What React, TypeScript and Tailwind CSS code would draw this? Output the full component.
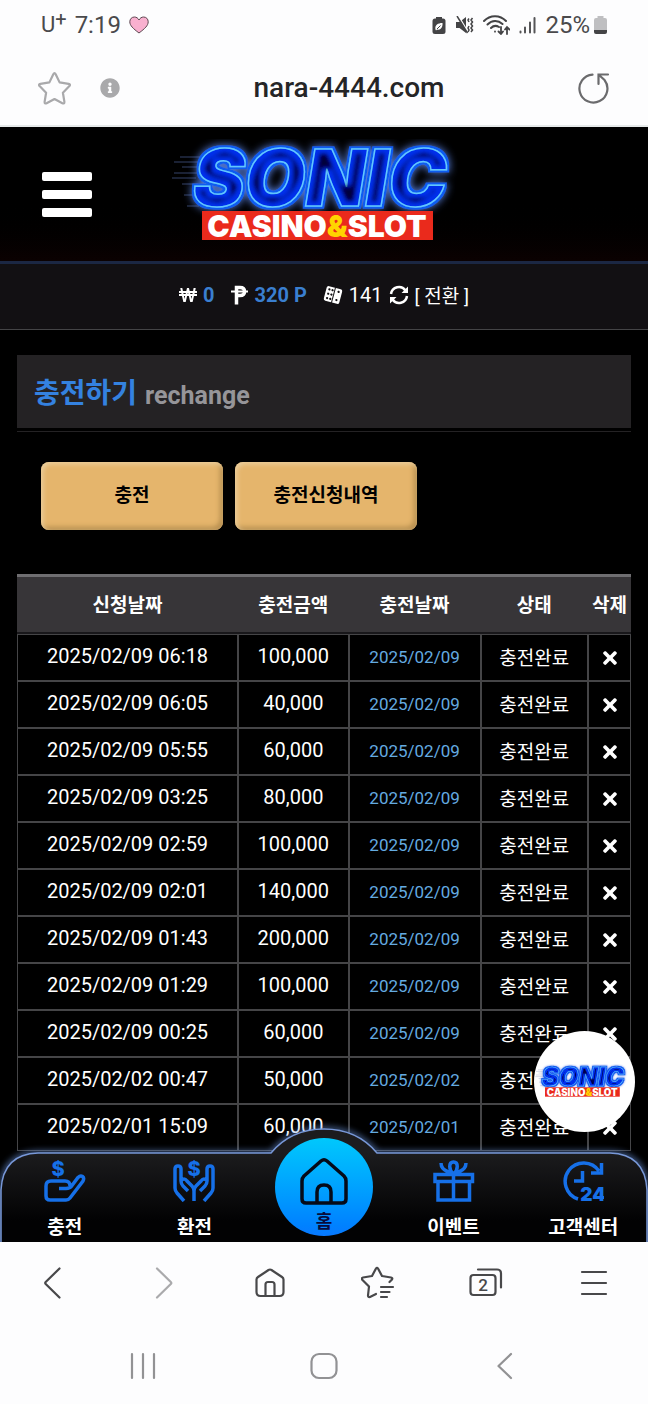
import type { ReactNode } from "react";
import { FaInfoCircle, FaTimes, FaWonSign } from "react-icons/fa";

const rows = [
	{ requested: "2025/02/09 06:18", amount: "100,000", charged: "2025/02/09" },
	{ requested: "2025/02/09 06:05", amount: "40,000", charged: "2025/02/09" },
	{ requested: "2025/02/09 05:55", amount: "60,000", charged: "2025/02/09" },
	{ requested: "2025/02/09 03:25", amount: "80,000", charged: "2025/02/09" },
	{ requested: "2025/02/09 02:59", amount: "100,000", charged: "2025/02/09" },
	{ requested: "2025/02/09 02:01", amount: "140,000", charged: "2025/02/09" },
	{ requested: "2025/02/09 01:43", amount: "200,000", charged: "2025/02/09" },
	{ requested: "2025/02/09 01:29", amount: "100,000", charged: "2025/02/09" },
	{ requested: "2025/02/09 00:25", amount: "60,000", charged: "2025/02/09" },
	{ requested: "2025/02/02 00:47", amount: "50,000", charged: "2025/02/02" },
	{ requested: "2025/02/01 15:09", amount: "60,000", charged: "2025/02/01" },
];

function Logo({ id, className }: { id: string; className: string }) {
	return (
		<svg viewBox="168 140 312 110" className={className} role="img" aria-label="Sonic Casino & Slot">
			<defs>
				{/* Blue rim and halo outside the letters, navy core inside them */}
				<filter id={`${id}-neon`} x="-10%" y="-20%" width="120%" height="140%">
					<feMorphology in="SourceAlpha" operator="dilate" radius="2" result="fat" />
					<feFlood floodColor="#0b5cf0" />
					<feComposite in2="fat" operator="in" result="rim" />
					<feGaussianBlur in="fat" stdDeviation="4" result="soft" />
					<feFlood floodColor="#5a84e8" />
					<feComposite in2="soft" operator="in" result="halo" />
					<feMorphology in="SourceAlpha" operator="erode" radius="5" />
					<feGaussianBlur stdDeviation="2" result="inner" />
					<feFlood floodColor="#02023c" />
					<feComposite in2="inner" operator="in" result="core" />
					<feMerge>
						<feMergeNode in="halo" />
						<feMergeNode in="rim" />
						<feMergeNode in="SourceGraphic" />
						<feMergeNode in="core" />
					</feMerge>
				</filter>
			</defs>
			<path
				d="M180 158h22M174 163h26M182 168h18M174 174h24M172 179h24M182 185h16M184 196h14M187 207h12"
				stroke="#4d5f96"
				strokeWidth="1"
				opacity="0.7"
			/>
			<text
				x="193"
				y="207"
				fontFamily="Inter, sans-serif"
				fontWeight="900"
				fontStyle="italic"
				fontSize="78"
				fill="#0532ee"
				stroke="#62c8ff"
				strokeWidth="1.5"
				filter={`url(#${id}-neon)`}
			>
				SONIC
			</text>
			<rect x="202" y="212" width="231" height="29" fill="#ea2a1c" />
			<text x="317" y="238" textAnchor="middle" fontFamily="Inter, sans-serif" fontWeight="900" fontSize="30" fill="#fff">
				CASINO<tspan fill="#ffd400">&amp;</tspan>SLOT
			</text>
		</svg>
	);
}

function StatusBar() {
	return (
		<div className="flex h-[50px] items-center justify-between px-[41px] text-2xl text-[#4a4a4c]">
			<div className="flex items-center gap-2">
				<span className="flex items-start text-[22px] leading-7">
					U<span className="text-xl leading-4">+</span>
				</span>
				<span>7:19</span>
				<svg viewBox="0 0 20 18" className="h-[18px] w-5" fill="#f9b0cf" stroke="#5c4650" strokeWidth="1">
					<path d="M10 17C4 12.500.800 9.500.800 5.800.800 3 2.800 1 5.400 1 7.500 1 9 2.200 10 4c1-1.800 2.500-3 4.600-3 2.600 0 4.600 2 4.600 4.800C19.200 9.500 16 12.500 10 17z" />
				</svg>
			</div>
			<div className="flex items-center gap-[9px]">
				<svg viewBox="0 0 14 18" className="h-[18px] w-3.5" fill="#444446">
					<path d="M4 1h6v2H4z" />
					<rect x="0.5" y="2.500" width="13" height="15.500" rx="2.500" />
					<path d="M3.500 13.500C2.500 9 6 7 10.500 7c.5 4-2 7.500-5.500 6.500l-1 1z" fill="#fff" />
					<path d="M5 13l3.500-3.500" stroke="#444446" />
				</svg>
				<svg viewBox="0 0 19 18" className="h-[18px] w-[19px]" fill="#444446">
					<path d="M1 6h3.500L11 1v16l-6.500-5H1z" />
					<path d="M3.500 0l10 17" stroke="#fff" strokeWidth="1.500" />
					<path d="M2 0l10.500 17" stroke="#444446" strokeWidth="1.500" />
					<path d="M14 2.500l-1 1.500 1 2M17.500 2l-1.500 2 1.500 2-1.500 2 1.500 2-1.500 2 1.500 2-1.500 2M14 10l-1 2 1 2-1 2" stroke="#444446" strokeWidth="1.500" fill="none" />
				</svg>
				<svg viewBox="0 0 27 20" className="h-5 w-[27px]" fill="none" stroke="#444446" strokeWidth="2" strokeLinecap="round">
					<path d="M1 6C7-.5 17-.5 23 6M4.500 9.500c4.500-4.500 10.500-4.500 15-.5M8 13c2.500-2.500 5.500-2.500 8-1" />
					<path d="M12 16.500v.2M18 12v7m-2.500-2.500L18 19l2-2.500M24 19v-7m-2 2.500l2-2.500 2.500 2.500" strokeWidth="1.800" />
				</svg>
				<svg viewBox="0 0 17 18" className="h-[18px] w-[17px]" stroke="#555557" strokeWidth="2" strokeLinecap="round">
					<path d="M1.500 15.500v1M6 11.500v5M11 6.500v10M15.500 2v14.500" />
				</svg>
				<span className="flex items-center gap-1">
					25%
					<svg viewBox="0 0 13 18" className="h-[18px] w-[13px]">
						<path d="M3.500 0h6v2H11a2 2 0 0 1 2 2v10H0V4a2 2 0 0 1 2-2h1.500z" fill="#bfbfc1" />
						<path d="M0 14h13v2a2 2 0 0 1-2 2H2a2 2 0 0 1-2-2z" fill="#444446" />
					</svg>
				</span>
			</div>
		</div>
	);
}

function AddressBar() {
	return (
		<div className="flex h-[77px] items-center border-b-2 border-[#e6eaea] px-[38px]">
			<button type="button" aria-label="Bookmark">
				<svg viewBox="0 0 34 34" className="h-[34px] w-[34px]" fill="none" stroke="#a9a9ab" strokeWidth="2.200" strokeLinejoin="round">
					<path d="M15.300 3.200q1.200-2 2.400 0l3.900 8.200 9 1.400q2.200.6.800 2.300l-6.500 6.600 1.500 9.200q0 2.200-2 1.400L16.500 28l-7.900 4.300q-2 .8-2-1.400L8.100 21.700 1.600 15.100q-1.400-1.700.8-2.300l9-1.400z" />
				</svg>
			</button>
			<button type="button" aria-label="Site information" className="ml-7">
				<FaInfoCircle className="h-5 w-5 text-[#a9a9ab]" />
			</button>
			<span className="flex-1 text-center text-[28px] font-medium text-[#252527]">nara-4444.com</span>
			<button type="button" aria-label="Reload">
				<svg viewBox="0 0 32 32" className="h-8 w-8" fill="none" stroke="#6b6b6d" strokeWidth="2.200" strokeLinecap="round">
					<path d="M14.500 2.600A14 14 0 1 0 26.500 8L21 3M20.500 12V2.500h9.500" />
				</svg>
			</button>
		</div>
	);
}

function BalanceBar() {
	return (
		<div className="flex h-[66px] items-center justify-center border-b border-[#444446] bg-[#121013] pb-[3px] text-xl text-white">
			<FaWonSign className="mr-1.5 h-[18px] w-[18px]" />
			<span className="mr-[17px] font-bold text-[#3a7fd0]">0</span>
			<svg viewBox="0 0 17 20" className="mr-1.5 h-5 w-[17px]" fill="none" stroke="#fff">
				<path d="M5.500 19.500V2.500H9q4.500 0 4.500 4T9 10.500H5.500" strokeWidth="3.500" />
				<path d="M0 6.500h17" strokeWidth="2" />
			</svg>
			<span className="mr-4 font-bold text-[#3a7fd0]">320 P</span>
			<svg viewBox="0 0 20 20" className="mr-1.5 h-5 w-5">
				<g transform="rotate(15 10 10)">
					<rect x="2" y="2.500" width="16" height="15" rx="2" fill="#fff" />
					<path d="M10.500 2v16" stroke="#121013" />
					<path d="M5 5.500h.1M5 10h.1M5 14.500h.1M8.300 5.500h.1M8.300 10h.1M8.300 14.500h.1M14.500 5.500h.1M14.500 14h.1" stroke="#121013" strokeWidth="2.200" strokeLinecap="round" />
				</g>
			</svg>
			<span className="mr-1.5">141</span>
			<button type="button" className="flex items-center gap-1.5">
				<svg viewBox="0 0 20 20" className="h-5 w-5" fill="none" stroke="#fff" strokeWidth="2.500">
					<path d="M2 9a8 8 0 0 1 14.500-3.500M18 11A8 8 0 0 1 3.500 14.500" />
					<path d="M19 1.500V8h-6.500zM1 18.500V12h6.500z" fill="#fff" stroke="none" />
				</svg>
				<span className="pt-1 text-[19px]">[ 전환 ]</span>
			</button>
		</div>
	);
}

function HistoryTable() {
	const cell = "h-[47px] border border-[#454547]";
	return (
		<table className="w-full table-fixed border-separate border-spacing-0 text-center text-white">
			<colgroup>
				<col className="w-[36%]" />
				<col className="w-[18%]" />
				<col className="w-[21.5%]" />
				<col className="w-[17.500%]" />
				<col className="w-[7%]" />
			</colgroup>
			<thead>
				<tr className="text-[19px]">
					{["신청날짜", "충전금액", "충전날짜", "상태", "삭제"].map((label) => (
						<th
							key={label}
							className="h-[60px] whitespace-nowrap border-b-2 border-t-[3px] border-b-[#18171a] border-t-[#6f6e71] bg-[#373538] p-0 pt-1 font-bold"
						>
							{label}
						</th>
					))}
				</tr>
			</thead>
			<tbody>
				{rows.map((row) => (
					<tr key={row.requested}>
						<td className={`${cell} p-0 pb-[3px] text-xl`}>{row.requested}</td>
						<td className={`${cell} p-0 pb-[3px] text-xl`}>{row.amount}</td>
						<td className={`${cell} p-0 text-[17px] text-[#64abe0]`}>{row.charged}</td>
						<td className={`${cell} p-0 pt-[3px] text-[19px]`}>충전완료</td>
						<td className={`${cell} p-0`}>
							<button type="button" aria-label="삭제" className="block w-full">
								<FaTimes className="mx-auto h-5 w-4" />
							</button>
						</td>
					</tr>
				))}
			</tbody>
		</table>
	);
}

function NavItem({ label, children }: { label: string; children: ReactNode }) {
	return (
		<a href="#" className="flex flex-col items-center text-[19px] font-bold text-white">
			<svg viewBox="0 0 42 42" className="h-[42px] w-[42px]" fill="none" stroke="#1670e8" strokeWidth="3.500" fontFamily="Inter, sans-serif">
				{children}
			</svg>
			<span className="mt-3 leading-7">{label}</span>
		</a>
	);
}

function BottomNav() {
	return (
		<nav className="absolute inset-x-0 bottom-0">
			{/* Curved backdrop with the raised middle */}
			<svg
				viewBox="0 0 648 124"
				preserveAspectRatio="none"
				className="absolute bottom-0 h-[124px] w-full"
				aria-hidden="true"
			>
				<defs>
					<linearGradient id="nav-bg" x1="0" y1="0" x2="0" y2="1">
						<stop offset="0.2" stopColor="#1c1c1e" />
						<stop offset="0.8" stopColor="#020203" />
					</linearGradient>
					<filter id="nav-glow" x="-5%" y="-20%" width="110%" height="140%">
						<feGaussianBlur stdDeviation="3" />
					</filter>
				</defs>
				<path d="M1 126V72Q3 36 38 35H271Q291 11 324 11T377 35H610Q645 36 647 72V126" fill="none" stroke="#6f9ae6" strokeWidth="3" filter="url(#nav-glow)" />
				<path d="M1 126V72Q3 36 38 35H271Q291 11 324 11T377 35H610Q645 36 647 72V126" fill="url(#nav-bg)" stroke="#7898d8" strokeWidth="1.500" />
			</svg>
			<div className="relative grid grid-cols-5 items-end">
				<NavItem label="충전">
					<path d="M15 28.500h7q4 0 6-3l6-8q2.500-2.500 4.500-1t.5 4.500L26 38q-1.500 2-4 2H6q-4 0-4-4V26q0-5 5-5h14q5 0 5 5" />
					<text x="14" y="16" textAnchor="middle" fontSize="20" fontWeight="800" fill="#1670e8" stroke="none">$</text>
				</NavItem>
				<NavItem label="환전">
					<path d="M11 41L4 33q-2-2-2-5V9q0-3 3-3t3 3v12q0 3 2 5l5 5M8 21q3-4 6 0l5 5q2 2 2 5v10M31 41l7-8q2-2 2-5V9q0-3-3-3t-3 3v12q0 3-2 5l-5 5M34 21q-3-4-6 0l-5 5q-2 2-2 5" />
					<text x="21" y="16" textAnchor="middle" fontSize="20" fontWeight="800" fill="#1670e8" stroke="none">$</text>
				</NavItem>
				<a href="#" className="flex justify-center pb-1.5">
					<span className="flex h-[98px] w-[98px] flex-col items-center rounded-full bg-linear-to-b from-[#00c8fc] to-[#0878ff] pt-[18px] text-lg leading-8 font-bold text-[#070b3d]">
						<svg viewBox="0 0 48 50" className="h-[50px] w-12 shrink-0" fill="none" stroke="#050a18" strokeWidth="3.500" strokeLinejoin="round">
							<path d="M17 47H6q-4 0-4-4V25q0-3 2-5L21 5q3-2.500 6 0l17 15q2 2 2 5v18q0 4-4 4H31V36q0-7-7-7t-7 7zM17 47h14" />
						</svg>
						<span>홈</span>
					</span>
				</a>
				<NavItem label="이벤트">
					<path d="M2 14.500h37.500v7H2zM5 22v18h31.500V22M20.500 14v26M20.500 14c-5-4-5-12 0-12s5 8 0 12zM8 3c0 6 4 7 9 10M33 3c0 6-4 7-9 10" />
				</NavItem>
				<NavItem label="고객센터">
					<path d="M16 39A18.500 18.500 0 1 1 37 11M39.500 3v10H29M20.500 11v10H12" />
					<text x="31" y="41" textAnchor="middle" fontSize="19" fontWeight="900" fill="#1670e8" stroke="none">24</text>
				</NavItem>
			</div>
		</nav>
	);
}

function BrowserToolbar() {
	return (
		<div className="grid h-[82px] grid-cols-6 place-items-center text-[#48484a]">
			<button type="button" aria-label="Back">
				<svg viewBox="0 0 34 34" className="h-[34px] w-[34px]" fill="none" stroke="currentColor" strokeWidth="2.200" strokeLinecap="round" strokeLinejoin="round">
					<path d="M22.500 2.500L8.700 16q-1 1 0 2l13.800 13.500" />
				</svg>
			</button>
			<button type="button" aria-label="Forward" className="text-[#aaaaac]">
				<svg viewBox="0 0 34 34" className="h-[34px] w-[34px]" fill="none" stroke="currentColor" strokeWidth="2.200" strokeLinecap="round" strokeLinejoin="round">
					<path d="M12 2.500L25.800 16q1 1 0 2L12 31.500" />
				</svg>
			</button>
			<button type="button" aria-label="Home">
				<svg viewBox="0 0 34 34" className="h-[34px] w-[34px]" fill="none" stroke="currentColor" strokeWidth="2.200" strokeLinejoin="round">
					<path d="M3.500 13.500q0-1.500 1.500-2.500L15.500 4q1.500-1 3 0L29 11q1.500 1 1.500 2.500V26q0 4-4 4h-19q-4 0-4-4zM12.500 30V18.500q0-2.500 2.500-2.500h4q2.500 0 2.500 2.500V30" />
				</svg>
			</button>
			<button type="button" aria-label="Bookmarks">
				<svg viewBox="0 0 34 34" className="h-[34px] w-[34px]" fill="none" stroke="currentColor" strokeWidth="2.200" strokeLinecap="round" strokeLinejoin="round">
					<path d="M28.500 16l2.500-2.500q1-1.500-1-2l-9-1.500-4-7.500q-1-1.500-2 0l-4 7.500-9 1.500q-2 .5-1 2l7 7-1 9q0 2 2 1.500l6-3M20 21h12M20 26h8.500M20 31h6" />
				</svg>
			</button>
			<button type="button" aria-label="Tabs">
				<svg viewBox="0 0 34 34" className="h-[34px] w-[34px]" fill="none" stroke="currentColor" strokeWidth="2.200" strokeLinecap="round">
					<rect x="1.500" y="9" width="25" height="20" rx="3" />
					<path d="M9 3.500h19q4 0 4 4v14" />
					<text x="14" y="25" textAnchor="middle" fontSize="17" fontWeight="500" fill="currentColor" stroke="none">2</text>
				</svg>
			</button>
			<button type="button" aria-label="Menu">
				<svg viewBox="0 0 34 34" className="h-[34px] w-[34px]" stroke="currentColor" strokeWidth="2.200" strokeLinecap="round">
					<path d="M5 6h24M5 17h24M5 28h24" />
				</svg>
			</button>
		</div>
	);
}

function SystemNav() {
	return (
		<div className="grid h-20 grid-cols-3 place-items-center px-[8%] pt-1 text-[#929294]">
			<button type="button" aria-label="Recent apps">
				<svg viewBox="0 0 28 28" className="h-7 w-7" stroke="currentColor" strokeWidth="2.200" strokeLinecap="round">
					<path d="M3 2v24M14 2v24M25 2v24" />
				</svg>
			</button>
			<button type="button" aria-label="Home screen">
				<svg viewBox="0 0 28 28" className="h-7 w-7" fill="none" stroke="currentColor" strokeWidth="2.200">
					<rect x="1.500" y="2" width="25" height="24" rx="7.500" />
				</svg>
			</button>
			<button type="button" aria-label="Go back">
				<svg viewBox="0 0 28 28" className="h-7 w-7" fill="none" stroke="currentColor" strokeWidth="2.200" strokeLinecap="round" strokeLinejoin="round">
					<path d="M20 2L7.500 14 20 26" />
				</svg>
			</button>
		</div>
	);
}

export default function App() {
	return (
		<div className="flex h-screen flex-col bg-[#fdfdfe] font-[Roboto,'Noto_Sans_CJK_KR',sans-serif]">
			<StatusBar />
			<AddressBar />

			<div className="relative min-h-0 flex-1 overflow-hidden bg-black">
				<div className="h-full overflow-y-auto [scrollbar-width:none]">
					<header className="grid h-[137px] grid-cols-[1fr_auto_1fr] items-center border-b-[3px] border-[#1b2743] bg-linear-to-b from-black via-black to-[#0b0101]">
						<button type="button" aria-label="메뉴" className="ml-[42px] flex w-[50px] flex-col gap-[9px]">
							<span className="h-[9px] w-full rounded-xs bg-white" />
							<span className="h-[9px] w-full rounded-xs bg-white" />
							<span className="h-[9px] w-full rounded-xs bg-white" />
						</button>
						<Logo id="header-logo" className="h-[110px] w-[312px]" />
					</header>
					<BalanceBar />

					<main className="px-[17px] pt-[25px]">
						<div className="border-b border-[#242224] pb-[3px]">
							<h1 className="flex h-[73px] items-center gap-2 bg-[#242224] px-[17px] pt-1 text-[28px] font-bold text-[#3482e0]">
								충전하기
								<small className="pt-1 text-[25px] font-bold text-[#969599]">rechange</small>
							</h1>
						</div>
						<div className="mt-[30px] mb-11 flex gap-3 px-6 text-[19px] font-bold text-black">
							<button type="button" className="h-[68px] w-[182px] rounded-lg bg-[#e5b56c] shadow-[inset_2px_2px_5px_#ecd0a0,inset_-3px_-3px_5px_#b58d4e]">
								충전
							</button>
							<button type="button" className="h-[68px] w-[182px] rounded-lg bg-[#e5b56c] shadow-[inset_2px_2px_5px_#ecd0a0,inset_-3px_-3px_5px_#b58d4e]">
								충전신청내역
							</button>
						</div>
						<HistoryTable />
					</main>
				</div>

				<a href="#" className="absolute right-[13px] bottom-[110px] flex h-[101px] w-[101px] items-center justify-center rounded-full bg-white">
					<Logo id="float-logo" className="h-auto w-full" />
				</a>
				<BottomNav />
			</div>

			<BrowserToolbar />
			<SystemNav />
		</div>
	);
}
